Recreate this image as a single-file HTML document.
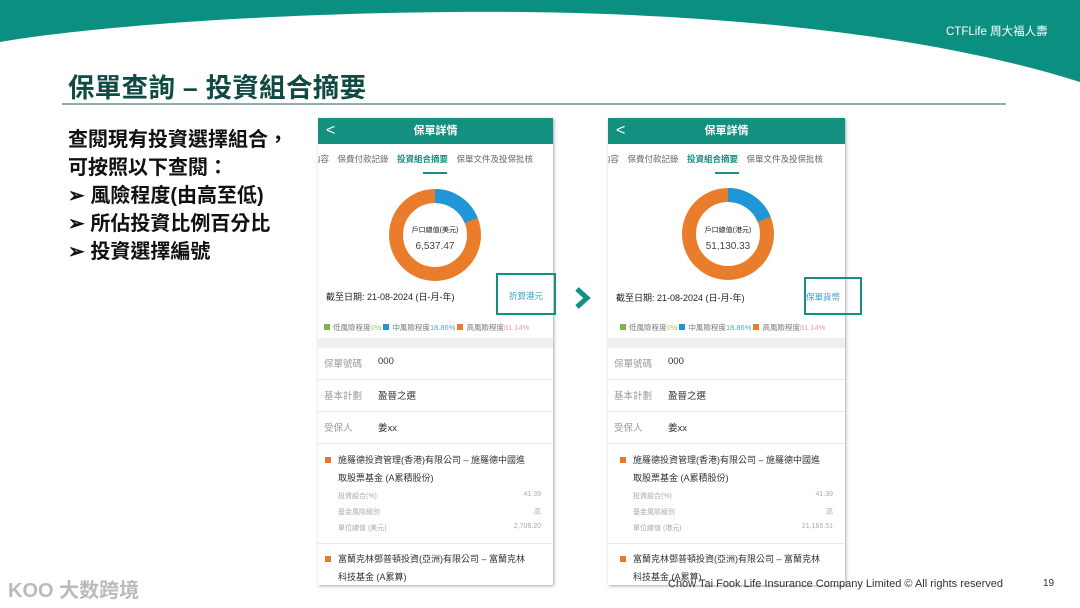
<!DOCTYPE html>
<html><head><meta charset="utf-8">
<style>
*{margin:0;padding:0;box-sizing:border-box}
body{width:1080px;height:608px;position:relative;overflow:hidden;background:#fff;font-family:"Liberation Sans","Noto Sans CJK TC",sans-serif}
.abs{position:absolute}
.title{left:68px;top:66px;font-size:26.5px;font-weight:bold;color:#0f4a43;letter-spacing:0.3px}
.rule{left:62px;top:103px;width:944px;height:2px;background:#8fb0aa}
.txt{left:68px;font-size:20px;font-weight:bold;color:#111;line-height:28px;top:126px}
.phone{position:absolute;top:118px;height:467px;background:#fff;box-shadow:1px 1px 3px rgba(0,0,0,.35);overflow:hidden}
.hd{position:absolute;left:0;top:0;right:0;height:26px;background:#149080;color:#fff;font-size:11px;font-weight:bold;text-align:center;line-height:26px}
.hd span{position:absolute;left:8px;top:0;font-weight:normal;font-size:16px}
.tabs{position:absolute;top:35px;left:-6px;white-space:nowrap;font-size:8.5px;color:#666;word-spacing:10px}
.tabs b{color:#149080}
.ul{position:absolute;top:54px;width:24px;height:2px;background:#149080}
.date{position:absolute;left:8px;top:172px;font-size:9px;color:#222}
.leg{position:absolute;left:6px;top:204px;font-size:7.5px;color:#777;white-space:nowrap}
.sq{display:inline-block;width:6px;height:6px;margin-right:3px;vertical-align:0}
.gray{position:absolute;left:0;right:0;top:220px;height:10px;background:#f0f0f0}
.row{position:absolute;left:0;right:0;height:32px;border-bottom:1px solid #e8e8e8;font-size:9.5px}
.row i{position:absolute;left:6px;top:8px;font-style:normal;color:#999}
.row b{position:absolute;left:60px;top:8px;font-weight:normal;color:#333}
.fund{position:absolute;left:20px;font-size:9px;color:#333;line-height:18px}
.fsq{position:absolute;left:7px;width:6px;height:6px;background:#e9782a}
.det{position:absolute;left:20px;right:12px;font-size:7px;color:#aaa}
.det span{float:right}
.hl{position:absolute;border:2px solid #149080}
</style></head><body>
<svg class="abs" style="left:0;top:0" width="1080" height="110"><path d="M0 0H1080V82C900 25 650 10 450 12 250 14 80 28 0 42Z" fill="#0a8f80"/></svg>
<div class="abs" style="left:946px;top:23px;font-size:11.5px;color:#fff">CTFLife 周大福人壽</div>
<div class="abs title">保單查詢 – 投資組合摘要</div>
<div class="abs rule"></div>
<div class="abs txt">查閱現有投資選擇組合，<br>可按照以下查閱：<br>➢ 風險程度(由高至低)<br>➢ 所佔投資比例百分比<br>➢ 投資選擇編號</div>

<div class="phone" style="left:318px;width:235px">
<div class="hd"><span>&lt;</span>保單詳情</div>
<div class="tabs">內容　保費付款記錄　<b>投資組合摘要</b>　保單文件及投保批核</div>
<div class="ul" style="left:105px"></div>
<svg class="abs" style="left:71px;top:71px" width="92" height="92"><circle cx="46" cy="46" r="39" fill="none" stroke="#ea7d2b" stroke-width="14"/><circle cx="46" cy="46" r="39" fill="none" stroke="#1e96d8" stroke-width="14" stroke-dasharray="46.2 300" transform="rotate(-90 46 46)"/></svg>
<div class="abs" style="left:0;width:234px;top:107px;text-align:center;font-size:7px;color:#222">戶口總值(美元)</div>
<div class="abs" style="left:0;width:234px;top:123px;text-align:center;font-size:10px;color:#444">6,537.47</div>
<div class="date">截至日期: 21-08-2024 (日-月-年)</div>
<div class="abs" style="left:191px;top:172px;font-size:8.5px;color:#3aa0c8">折算港元</div>
<div class="leg"><span class="sq" style="background:#7ab648"></span>低風險程度<span style="color:#9c6">0%</span> <span class="sq" style="background:#1e96d8"></span>中風險程度<span style="color:#5ab">18.86%</span> <span class="sq" style="background:#ea7d2b"></span>高風險程度<span style="color:#e9a">81.14%</span></div>
<div class="gray"></div>
<div class="row" style="top:230px"><i>保單號碼</i><b>000</b></div>
<div class="row" style="top:262px"><i>基本計劃</i><b>盈晉之選</b></div>
<div class="row" style="top:294px"><i>受保人</i><b>姜xx</b></div>
<div class="fsq" style="top:339px"></div>
<div class="fund" style="top:333px">施羅德投資管理(香港)有限公司 – 施羅德中國進<br>取股票基金 (A累積股份)</div>
<div class="det" style="top:373px">投資組合(%)<span>41.39</span></div>
<div class="det" style="top:389px">基金風險級別<span>高</span></div>
<div class="det" style="top:405px">單位總值 (美元)<span>2,706.20</span></div>
<div class="abs" style="left:0;right:0;top:425px;height:1px;background:#e8e8e8"></div>
<div class="fsq" style="top:438px"></div>
<div class="fund" style="top:432px">富蘭克林鄧普頓投資(亞洲)有限公司 – 富蘭克林<br>科技基金 (A累算)</div>
</div>

<div class="phone" style="left:608px;width:237px">
<div class="hd"><span>&lt;</span>保單詳情</div>
<div class="tabs">內容　保費付款記錄　<b>投資組合摘要</b>　保單文件及投保批核</div>
<div class="ul" style="left:107px"></div>
<svg class="abs" style="left:74px;top:70px" width="92" height="92"><circle cx="46" cy="46" r="39" fill="none" stroke="#ea7d2b" stroke-width="14"/><circle cx="46" cy="46" r="39" fill="none" stroke="#1e96d8" stroke-width="14" stroke-dasharray="46.2 300" transform="rotate(-90 46 46)"/></svg>
<div class="abs" style="left:0;width:240px;top:107px;text-align:center;font-size:7px;color:#222">戶口總值(港元)</div>
<div class="abs" style="left:0;width:240px;top:123px;text-align:center;font-size:10px;color:#444">51,130.33</div>
<div class="date" style="top:173px">截至日期: 21-08-2024 (日-月-年)</div>
<div class="abs" style="left:198px;top:173px;font-size:8.5px;color:#3aa0c8">保單貨幣</div>
<div class="leg" style="left:12px"><span class="sq" style="background:#7ab648"></span>低風險程度<span style="color:#9c6">0%</span> <span class="sq" style="background:#1e96d8"></span>中風險程度<span style="color:#5ab">18.86%</span> <span class="sq" style="background:#ea7d2b"></span>高風險程度<span style="color:#e9a">81.14%</span></div>
<div class="gray"></div>
<div class="row" style="top:230px"><i>保單號碼</i><b>000</b></div>
<div class="row" style="top:262px"><i>基本計劃</i><b>盈晉之選</b></div>
<div class="row" style="top:294px"><i>受保人</i><b>姜xx</b></div>
<div class="fsq" style="top:339px;left:12px"></div>
<div class="fund" style="top:333px;left:25px">施羅德投資管理(香港)有限公司 – 施羅德中國進<br>取股票基金 (A累積股份)</div>
<div class="det" style="top:373px;left:25px">投資組合(%)<span>41.39</span></div>
<div class="det" style="top:389px;left:25px">基金風險級別<span>高</span></div>
<div class="det" style="top:405px;left:25px">單位總值 (港元)<span>21,165.51</span></div>
<div class="abs" style="left:0;right:0;top:425px;height:1px;background:#e8e8e8"></div>
<div class="fsq" style="top:438px;left:12px"></div>
<div class="fund" style="top:432px;left:25px">富蘭克林鄧普頓投資(亞洲)有限公司 – 富蘭克林<br>科技基金 (A累算)</div>
</div>

<div class="hl" style="left:496px;top:273px;width:60px;height:42px"></div>
<div class="hl" style="left:804px;top:277px;width:58px;height:38px"></div>
<svg class="abs" style="left:572px;top:286px" width="22" height="24"><path d="M5 3L15 12L5 21" fill="none" stroke="#149080" stroke-width="5"/></svg>
<div class="abs" style="left:668px;top:578px;font-size:11px;color:#333">Chow Tai Fook Life Insurance Company Limited © All rights reserved</div>
<div class="abs" style="left:1043px;top:578px;font-size:10px;color:#333">19</div>
<div class="abs" style="left:8px;top:574px;font-size:20px;color:#bbb;font-weight:bold">KOO 大数跨境</div>
</body></html>
